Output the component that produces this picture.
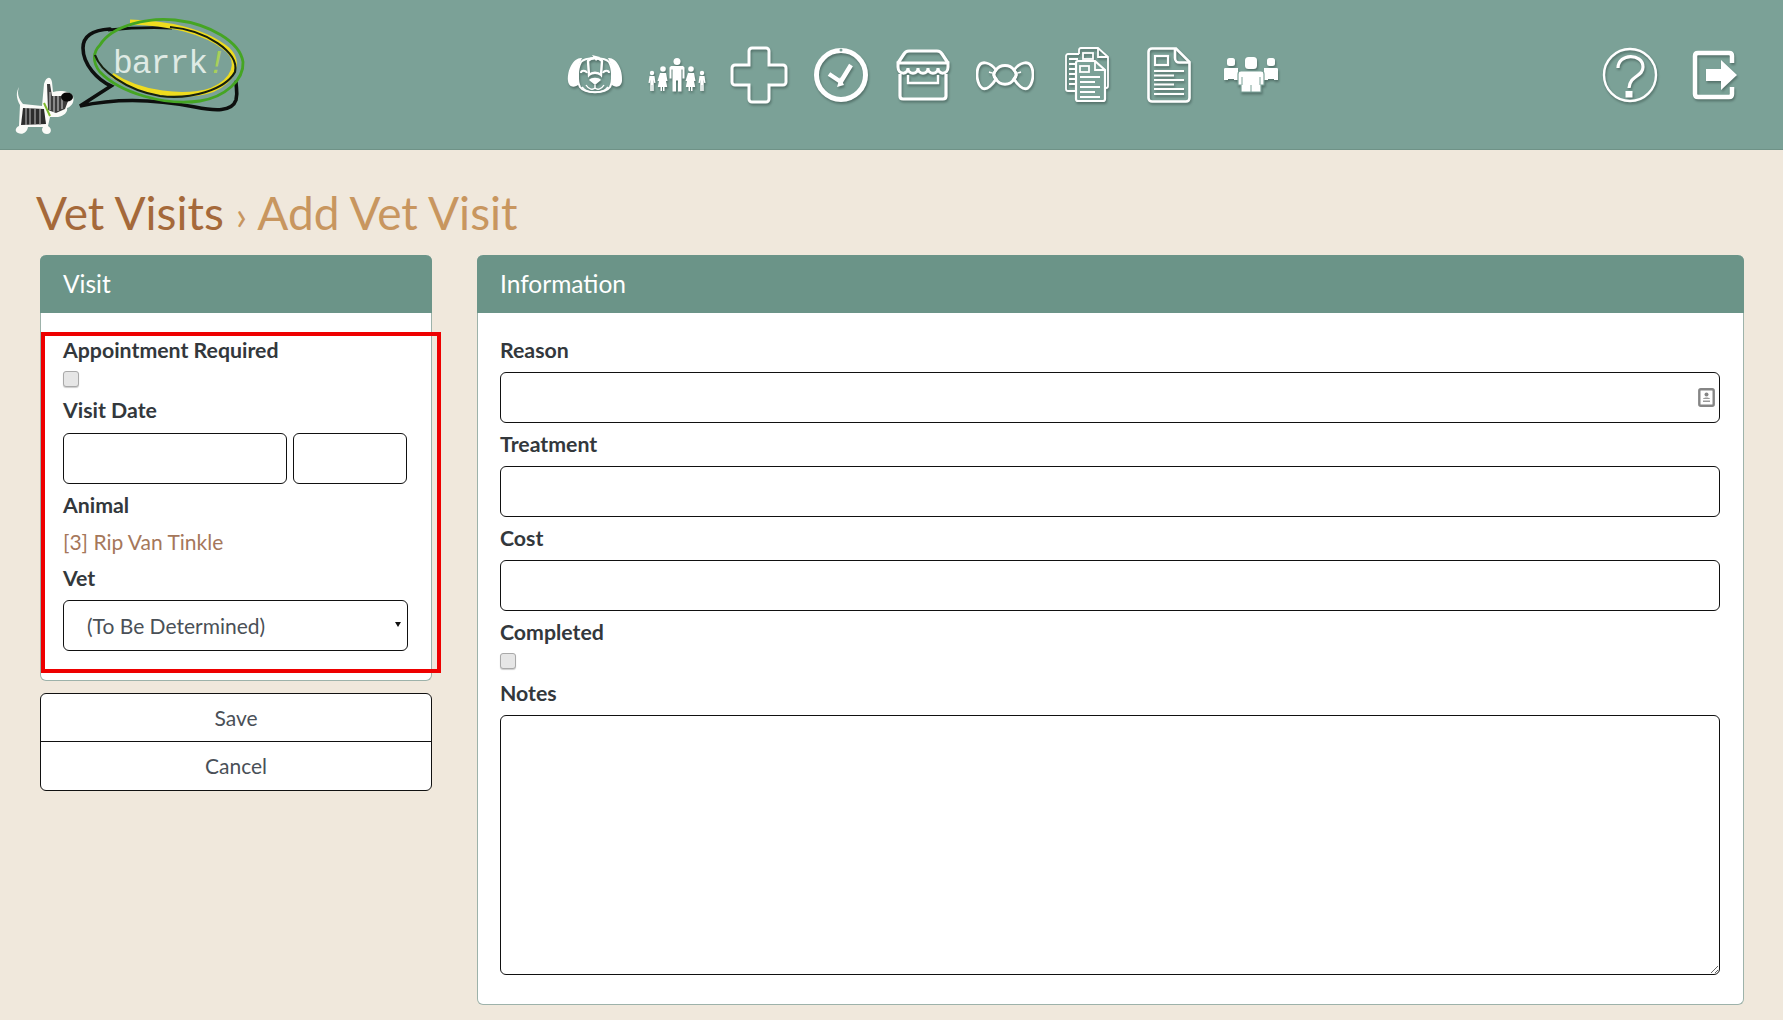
<script>
  const vetOptions = ['(To Be Determined)'];
</script>

<div class="page">
  <header class="topbar">
    <svg class="logo" viewBox="0 0 250 140" width="250" height="140" aria-label="barrk logo">
      <path d="M110 29 C92 30 83 36 83 48 C83 65 98 80 111 86 L80 106 C125 96 165 101 195 107 C215 111 232 112 236 100 C238 92 236 88 236 82" fill="none" stroke="#0d0f0e" stroke-width="3.600" stroke-linecap="round"/>
      <path d="M108 30 C128 28 150 27 172 28" fill="none" stroke="#0d0f0e" stroke-width="2.800"/>
      <path d="M130 22 C165 23 205 30 228 50 C240 62 235 80 212 90 C185 99 140 94 112 75" fill="none" stroke="#efdc1f" stroke-width="5"/>
      <path d="M100 45 C112 25 150 17 175 20 C210 24 240 42 243 62 C244 80 225 97 200 101 C165 106 120 93 100 72 C92 62 93 52 100 45Z" fill="none" stroke="#45a523" stroke-width="2.800"/>
      <path d="M95 55 C100 70 125 90 160 96 C190 100 225 90 235 72 C240 52 205 30 170 27" fill="none" stroke="#16200f" stroke-width="2.200"/>
      <text class="logo-word" x="113" y="73">barrk<tspan class="logo-bang">!</tspan></text>
      <path d="M19 87 C17 93 18 98 23 104 L42 106 L44 84 C46 76 51 76 52 82 L53 92 C60 90 70 91 73 96 C75 102 71 107 67 108 C68 112 64 116 58 117 L50 117 L48 126 C52 128 52 134 47 134 C42 134 41 129 43 127 L28 127 C27 133 22 135 18 133 C14 131 16 127 19 126 L20 105 C16 98 16 92 19 87Z" fill="#fbfbf8"/>
      <path d="M23 108 L44 109 L46 124 L21 125Z" fill="#2c2c2c"/>
      <path d="M26 108v17M30 108v17M35 109v16M40 109v16" stroke="#a8a8a8" stroke-width="1.200"/>
      <path d="M47 84 L50 84 L52 96 L70 96 L65 109 L56 113 L48 110Z" fill="#3c3c3c"/>
      <path d="M50 92v18M54 96v16M58 96v15M62 96v13" stroke="#c8c8c8" stroke-width="1.100"/>
      <ellipse cx="67" cy="97" rx="6" ry="4.500" fill="#080808"/>
      <path d="M44 103 L50 116" stroke="#7ebb2d" stroke-width="2"/>
    </svg>

    <nav class="icon-nav">
      <a class="nav-item" href="#animals" aria-label="Animals">
        <svg viewBox="0 0 56 42" width="56" height="42">
          <path d="M15 4 C7 3 0 15 1 27 C2 34 8 34 12 30 L12 11Z M41 4 C49 3 56 15 55 27 C54 34 48 34 44 30 L44 11Z" fill="#fff"/>
          <path d="M14 8 C18 3 38 3 42 8 C46 15 46 27 43 33 C38 40 18 40 13 33 C10 27 10 15 14 8Z" fill="none" stroke="#fff" stroke-width="2"/>
          <path d="M21 7 C24 3 32 3 35 7 L34 21 C31 18 25 18 22 21Z" fill="none" stroke="#fff" stroke-width="2.400"/>
          <path d="M25 1 L33 3 L29 7Z" fill="#fff"/>
          <path d="M14 19 C14 16 19 16 20 19M36 19 C37 16 42 16 42 19" fill="none" stroke="#fff" stroke-width="2"/>
          <path d="M22 26 C24 23 32 23 34 26 L28 31Z" fill="#fff"/>
          <path d="M28 31 V34 M19 31 C22 36 26 36 28 34 C30 36 34 36 37 31M15 33 C20 40 36 40 41 33" fill="none" stroke="#fff" stroke-width="1.400"/>
        </svg>
      </a>
      <a class="nav-item" href="#family" aria-label="Clients">
        <svg viewBox="0 0 58 34" width="58" height="34">
          <g fill="#fff">
            <circle cx="29" cy="3.500" r="3.500"/>
            <path d="M23 8h12l1.500 1.500v11h-2v-9h-1v22h-3.500v-11h-2v11h-3.500v-22h-1v9h-2v-11z"/>
            <circle cx="15" cy="11" r="2.800"/>
            <path d="M12 15h6l1.500 8h-1.500l-.8-4 2 10h-2.700v4h-1.500v-4h-1v4h-1.500v-4h-2.700l2-10-.8 4h-1.500z"/>
            <circle cx="43" cy="11" r="2.800"/>
            <path d="M40 15h6l1.500 8h-1.500l-.8-4 2 10h-2.700v4h-1.500v-4h-1v4h-1.500v-4h-2.700l2-10-.8 4h-1.500z"/>
            <circle cx="4" cy="15" r="2.200"/>
            <path d="M1.500 18h5l1 7h-1.300l-.5-3.500v11.500h-1.500v-6h-.4v6h-1.500v-11.500l-.5 3.500h-1.300z"/>
            <circle cx="54" cy="15" r="2.200"/>
            <path d="M51.500 18h5l1 7h-1.300l-.5-3.500v11.500h-1.500v-6h-.4v6h-1.500v-11.500l-.5 3.500h-1.300z"/>
          </g>
        </svg>
      </a>
      <a class="nav-item" href="#vet" aria-label="Vet Visits">
        <svg viewBox="0 0 58 58" width="58" height="58">
          <path d="M22 2h14a3 3 0 0 1 3 3v14h14a3 3 0 0 1 3 3v14a3 3 0 0 1-3 3H39v14a3 3 0 0 1-3 3H22a3 3 0 0 1-3-3V39H5a3 3 0 0 1-3-3V22a3 3 0 0 1 3-3h14V5a3 3 0 0 1 3-3z" fill="none" stroke="#fff" stroke-width="3"/>
        </svg>
      </a>
      <a class="nav-item" href="#schedule" aria-label="Schedule">
        <svg viewBox="0 0 56 56" width="56" height="56">
          <circle cx="28" cy="28" r="24.500" fill="none" stroke="#fff" stroke-width="5"/>
          <path d="M16 27 L28 35 M27 36 L38 18" fill="none" stroke="#fff" stroke-width="4.500"/>
          <path d="M27 30 L31 38 L24 40Z" fill="#fff"/>
          <circle cx="28" cy="3" r="1.500" fill="#7ba197"/>
        </svg>
      </a>
      <a class="nav-item" href="#store" aria-label="Store">
        <svg viewBox="0 0 56 54" width="56" height="54">
          <path d="M3 15 L9 6 C10 4 12 3 14 3 H42 C44 3 46 4 47 6 L53 15" fill="none" stroke="#fff" stroke-width="3.200"/>
          <path d="M3 15h50v4c0 8-10 8-10 1 0 7-10 7-10 0 0 7-10 7-10 0 0 7-10 7-10 0 0 7-10 7-10-1z" fill="none" stroke="#fff" stroke-width="3"/>
          <path d="M5 26v22c0 2 1 3 3 3h40c2 0 3-1 3-3V26" fill="none" stroke="#fff" stroke-width="3.200"/>
          <path d="M13 27v8h30v-8" fill="none" stroke="#fff" stroke-width="2.400"/>
        </svg>
      </a>
      <a class="nav-item" href="#supplies" aria-label="Supplies">
        <svg viewBox="0 0 58 32" width="58" height="32">
          <path d="M20 11 C15 4 5 0 2 9 C0 15 1 25 6 29 C11 32 17 25 20 20 C17 15 17 15 20 11Z" fill="none" stroke="#fff" stroke-width="2.800"/>
          <path d="M38 11 C43 4 53 0 56 9 C58 15 57 25 52 29 C47 32 41 25 38 20 C41 15 41 15 38 11Z" fill="none" stroke="#fff" stroke-width="2.800"/>
          <path d="M20 11 C24 5 34 5 38 11 C41 15 41 17 38 20 C34 27 24 27 20 20 C17 17 17 15 20 11Z" fill="none" stroke="#fff" stroke-width="2.800"/>
          <path d="M13 13 C16 14 18 14 19 15M45 13 C42 14 40 14 39 15" fill="none" stroke="#fff" stroke-width="1.400"/>
        </svg>
      </a>
      <a class="nav-item" href="#reports" aria-label="Reports">
        <svg viewBox="0 0 44 56" width="44" height="56">
          <g fill="none" stroke="#fff" stroke-width="1.800">
            <path d="M14 7V3c0-1 .5-2 2-2h17l10 9v29c0 1-.5 2-2 2h-1"/>
            <path d="M33 1v9h10"/>
            <path d="M14 7H3C2 7 1 8 1 9v33c0 1 1 2 2 2h7"/>
            <path d="M4 12h9M4 17h7M4 22h7M4 27h7M4 32h7M4 37h7"/>
            <rect x="18" y="6" width="10" height="6"/>
            <path d="M11 16c0-1 .5-2 2-2h17l10 9v29c0 1-.5 2-2 2H13c-1.500 0-2-1-2-2z" fill="#7ba197" stroke-width="2.200"/>
            <path d="M30 14v9h10"/>
            <rect x="15" y="19" width="9" height="6"/>
            <path d="M15 30h20M15 35h15M15 40h20M15 45h15M15 50h20"/>
          </g>
        </svg>
      </a>
      <a class="nav-item" href="#notes" aria-label="Notes">
        <svg viewBox="0 0 44 56" width="44" height="56">
          <g fill="none" stroke="#fff">
            <path d="M5 1.500h24L42.500 15v36c0 2-1.500 3.500-3.500 3.500H5c-2 0-3.500-1.500-3.500-3.500V5C1.500 3 3 1.500 5 1.500z" stroke-width="2.600"/>
            <path d="M28 2v9c0 3 2 4.500 4 4.500h10" stroke-width="2.600"/>
            <rect x="8" y="9" width="13" height="9" stroke-width="2.200"/>
            <path d="M7 24h30M7 28.500h20M7 33h30M7 37.500h20M7 42h30M7 47h30" stroke-width="2"/>
          </g>
        </svg>
      </a>
      <a class="nav-item" href="#staff" aria-label="Staff">
        <svg viewBox="0 0 56 36" width="56" height="36">
          <g fill="#fff">
            <rect x="4" y="1" width="8" height="8" rx="2.500"/>
            <path d="M2 11h13v12H11v-1H5v1H1V13c0-1 0-2 1-2z"/>
            <rect x="44" y="1" width="8" height="8" rx="2.500"/>
            <path d="M54 11H41v12h4v-1h6v1h4V13c0-1 0-2-1-2z"/>
            <rect x="22" y="0" width="12" height="12" rx="3.500"/>
            <path d="M18 14h20c2 0 3 1 3 3v11h-3v7H18v-7h-3V17c0-2 1-3 3-3z" stroke="#7ba197" stroke-width="1.200"/>
          </g>
          <path d="M19 20v8M37 20v8M28 28v7" stroke="#7ba197" stroke-width="1"/>
        </svg>
      </a>
    </nav>

    <div class="util-nav">
      <a class="help" href="#help" aria-label="Help">
        <svg viewBox="0 0 56 56" width="56" height="56">
          <circle cx="28" cy="28" r="26" fill="none" stroke="#fff" stroke-width="2.400"/>
          <path d="M16 21 C16 6 41 6 41 20 C41 30 28 28 27 41" fill="none" stroke="#fff" stroke-width="3.200"/>
          <rect x="23.500" y="44" width="7" height="6.500" fill="#fff"/>
        </svg>
      </a>
      <a class="exit" href="#logout" aria-label="Log out">
        <svg viewBox="0 0 46 50" width="46" height="50">
          <path d="M40 13V6c0-2-1-3-3-3H6C4 3 3 4 3 6v38c0 2 1 3 3 3h31c2 0 3-1 3-3v-7" fill="none" stroke="#fff" stroke-width="4.500"/>
          <path d="M14 19h15V10l16 15-16 15v-9H14z" fill="#fff"/>
        </svg>
      </a>
    </div>
  </header>

  <main class="content">
    <h1 class="title"><span class="crumb">Vet Visits</span> <span class="sep">›</span> Add Vet Visit</h1>

    <div class="columns">
      <div class="side">
        <section class="panel visit-panel">
          <h2 class="panel-head">Visit</h2>
          <div class="panel-body">
            <label class="field-label" for="appt">Appointment Required</label>
            <div class="check-row"><input id="appt" class="check" type="checkbox" /></div>
            <label class="field-label date-label" for="vdate">Visit Date</label>
            <div class="date-row">
              <input id="vdate" class="input date" type="text" />
              <input class="input time" type="text" aria-label="Visit time" />
            </div>
            <div class="field-label animal-label">Animal</div>
            <a class="animal-link" href="#animal">[3] Rip Van Tinkle</a>
            <label class="field-label vet-label" for="vet">Vet</label>
            <div class="select" id="vet">
              <span>{vetOptions[0]}</span>
              <svg class="caret" viewBox="0 0 6 5" width="6" height="5"><path d="M0 0h6L3 5z" fill="#111"/></svg>
            </div>
          </div>
        </section>
        <div class="actions">
          <button class="action" type="button">Save</button>
          <button class="action" type="button">Cancel</button>
        </div>
        <div class="highlight" aria-hidden="true"></div>
      </div>

      <section class="panel info-panel">
        <h2 class="panel-head">Information</h2>
        <div class="panel-body">
          <label class="field-label" for="reason">Reason</label>
          <div class="input-wrap">
            <input id="reason" class="input wide" type="text" />
            <svg class="contact-icon" viewBox="0 0 17 19" width="17" height="19">
              <rect x="1.300" y="1.300" width="14.400" height="16.400" rx="1.500" fill="#fff" stroke="#858585" stroke-width="2.400"/>
              <circle cx="8.500" cy="6.500" r="2" fill="#858585"/>
              <path d="M5 11c0-2 7-2 7 0zM5 12.500h7v1.500H5z" fill="#9a9a9a"/>
            </svg>
          </div>
          <label class="field-label after-input" for="treatment">Treatment</label>
          <input id="treatment" class="input wide" type="text" />
          <label class="field-label after-input" for="cost">Cost</label>
          <input id="cost" class="input wide" type="text" />
          <label class="field-label after-input" for="completed">Completed</label>
          <div class="check-row"><input id="completed" class="check" type="checkbox" /></div>
          <label class="field-label notes-label" for="notes">Notes</label>
          <textarea id="notes" class="notes"></textarea>
        </div>
      </section>
    </div>
  </main>
</div>

<style>
  :global(body) {
    margin: 0;
    background: #f0e8dc;
    font-family: Lato, "Noto Sans", sans-serif;
    color: #343a40;
  }
  .page { width: 1783px; height: 1020px; overflow: hidden; }
  .topbar {
    height: 149px;
    border-bottom: 1px solid #6f9287;
    background: #7ba197;
    position: relative;
    display: flex;
  }
  .logo { flex: none; }
  .logo-word { font-family: "Liberation Mono", monospace; font-size: 33px; fill: #dfeae4; letter-spacing: -1px; }
  .logo-bang { fill: #a9d05a; font-style: italic; }
  .icon-nav { display: flex; align-items: center; margin-left: 304px; height: 150px; }
  .nav-item { width: 82px; height: 150px; display: flex; align-items: center; justify-content: center; }
  .nav-item svg, .util-nav svg { filter: drop-shadow(1px 2px 1px rgba(40, 60, 55, .45)); display: block; }
  .util-nav { display: flex; align-items: center; margin-left: 310px; gap: 34px; height: 150px; }
  .title {
    margin: 0;
    padding: 36px 0 0 36px;
    font-size: 46px;
    line-height: 54px;
    font-weight: 400;
    color: #c8965f;
    height: 69px;
  }
  .crumb { color: #a5693a; }
  .sep { font-size: 40px; }
  .columns { display: flex; align-items: flex-start; padding-left: 40px; gap: 45px; }
  .side { width: 392px; flex: none; position: relative; }
  .panel {
    background: #fff;
    border: 1px solid #9db2aa;
    border-top: 0;
    border-radius: 6px;
    box-sizing: border-box;
  }
  .panel-head {
    height: 58px;
    margin: 0 -1px;
    padding: 0 23px;
    background: #6b9488;
    border-radius: 6px 6px 0 0;
    color: #fff;
    font-size: 24.500px;
    font-weight: 400;
    line-height: 58px;
  }
  .visit-panel { height: 426px; }
  .info-panel { width: 1267px; height: 750px; flex: none; }
  .panel-body { padding: 25px 22px 0; display: flex; flex-direction: column; align-items: flex-start; }
  .field-label {
    font-size: 21.300px;
    line-height: 25px;
    font-weight: 700;
    color: #33383c;
    display: block;
  }
  .check-row { height: 30px; display: flex; align-items: flex-start; }
  .check {
    appearance: none;
    width: 16px;
    height: 16px;
    margin: 8px 0 0;
    border: 1px solid #a9a9a9;
    border-radius: 3px;
    background: #e6e6e6;
    box-shadow: 0 1px 1px rgba(0,0,0,.2);
  }
  .date-label { margin-top: 5px; }
  .notes-label { margin-top: 6px; }
  .date-row { display: flex; gap: 6px; margin-top: 10px; }
  .input {
    display: block;
    box-sizing: border-box;
    height: 51px;
    border: 1px solid #111;
    border-radius: 6px;
    background: #fff;
    margin: 0;
    padding: 0;
    outline: none;
  }
  .date { width: 224px; }
  .time { width: 114px; }
  .animal-label { margin-top: 9px; }
  .animal-link {
    color: #a5775a;
    text-decoration: none;
    font-size: 21px;
    line-height: 25px;
    margin-top: 11px;
  }
  .vet-label { margin-top: 12px; }
  .select {
    box-sizing: border-box;
    width: 345px;
    height: 51px;
    margin-top: 9px;
    border: 1px solid #111;
    border-radius: 6px;
    padding: 0 0 0 23px;
    font-size: 21px;
    line-height: 50px;
    color: #4a5057;
    position: relative;
  }
  .caret { position: absolute; right: 6px; top: 21px; }
  .actions { margin-top: 12px; border: 1px solid #111; border-radius: 6px; background: #fff; box-sizing: border-box; height: 98px; overflow: hidden; }
  .action {
    display: block;
    width: 100%;
    height: 47px;
    border: 0;
    background: transparent;
    font: 400 21px/47px Lato, sans-serif;
    color: #4a5057;
    padding: 0;
  }
  .action + .action { border-top: 1px solid #111; height: 48px; line-height: 46px; }
  .highlight {
    position: absolute;
    left: 1px;
    top: 77px;
    width: 400px;
    height: 341px;
    box-sizing: border-box;
    border: 4px solid #ee0000;
    pointer-events: none;
  }
  .input-wrap { position: relative; width: 100%; }
  .wide { width: 1220px; }
  .contact-icon { position: absolute; left: 1198px; top: 16px; }
  .after-input { margin-top: 9px; }
  .after-input + .input { margin-top: 9px; }
  .panel-body > .input-wrap { margin-top: 9px; }
  .notes {
    display: block;
    box-sizing: border-box;
    width: 1220px;
    height: 260px;
    margin-top: 9px;
    border: 1px solid #111;
    border-radius: 6px;
    background: #fff;
    outline: none;
    resize: vertical;
    padding: 0;
  }
</style>
